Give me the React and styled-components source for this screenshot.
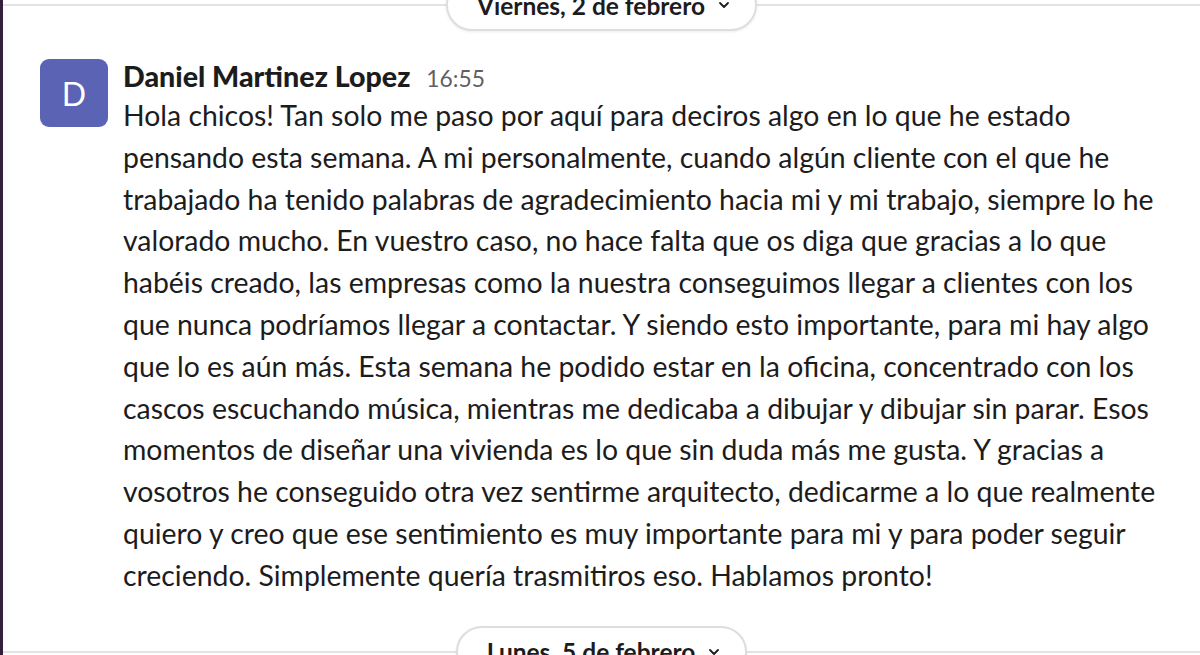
import React from 'react'
import styled, { createGlobalStyle } from 'styled-components'

const GlobalStyle = createGlobalStyle`
  html, body {
    margin: 0;
    padding: 0;
    background: #ffffff;
  }
  body {
    font-family: Lato, "Noto Sans", sans-serif;
    color: #1d1c1d;
    overflow: hidden;
  }
`

const Pane = styled.main`
  height: 655px;
  display: flex;
  flex-direction: column;
  border-left: 3px solid #35203b;
  box-sizing: border-box;
  overflow: hidden;
`

const Divider = styled.div`
  position: relative;
  display: flex;
  justify-content: center;
  height: 52px;
  margin-top: ${p => p.$offset}px;
  flex-shrink: 0;

  &::before {
    content: '';
    position: absolute;
    left: 0;
    right: 0;
    top: 25px;
    border-top: 2px solid #e3e3e3;
  }
`

const DayPill = styled.button`
  position: relative;
  display: flex;
  align-items: center;
  gap: 12px;
  height: 52px;
  padding: 0 24px 0 29px;
  border: 2px solid #dedede;
  border-radius: 26px;
  background: #ffffff;
  box-shadow: 0 1px 3px rgba(0, 0, 0, 0.08);
  font-family: Lato, "Noto Sans", sans-serif;
  font-size: 24.5px;
  font-weight: 700;
  color: #1d1c1d;
  box-sizing: border-box;
`

const Message = styled.article`
  display: flex;
  gap: 15px;
  padding: 28px 38px 0 37px;
  flex-shrink: 0;
`

const Avatar = styled.div`
  width: 68px;
  height: 68px;
  flex-shrink: 0;
  border-radius: 9px;
  background: #5b63b5;
  color: #ffffff;
  display: flex;
  align-items: center;
  justify-content: center;
  font-size: 32px;
  font-weight: 400;
`

const Content = styled.div`
  flex: 1;
  min-width: 0;
`

const Header = styled.div`
  display: flex;
  align-items: baseline;
  gap: 16px;
  line-height: 34px;
`

const Author = styled.span`
  font-size: 28.6px;
  font-weight: 900;
  color: #1d1c1d;
`

const Time = styled.span`
  font-size: 22.8px;
  color: #616061;
`

const Body = styled.p`
  margin: 0;
  font-size: 28.4px;
  line-height: 41.8px;
  color: #1d1c1d;
`

const Chevron = () => (
  <svg width="14" height="14" viewBox="0 0 14 14" fill="none">
    <path d="M3 5l4 4 4-4" stroke="#1d1c1d" strokeWidth="1.8" strokeLinecap="round" strokeLinejoin="round" />
  </svg>
)

const TEXT = 'Hola chicos! Tan solo me paso por aquí para deciros algo en lo que he estado pensando esta semana. A mi personalmente, cuando algún cliente con el que he trabajado ha tenido palabras de agradecimiento hacia mi y mi trabajo, siempre lo he valorado mucho. En vuestro caso, no hace falta que os diga que gracias a lo que habéis creado, las empresas como la nuestra conseguimos llegar a clientes con los que nunca podríamos llegar a contactar. Y siendo esto importante, para mi hay algo que lo es aún más. Esta semana he podido estar en la oficina, concentrado con los cascos escuchando música, mientras me dedicaba a dibujar y dibujar sin parar. Esos momentos de diseñar una vivienda es lo que sin duda más me gusta. Y gracias a vosotros he conseguido otra vez sentirme arquitecto, dedicarme a lo que realmente quiero y creo que ese sentimiento es muy importante para mi y para poder seguir creciendo. Simplemente quería trasmitiros eso. Hablamos pronto!'

export default function App () {
  return (
    <>
      <GlobalStyle />
      <Pane>
        <Divider $offset={-21}>
          <DayPill>Viernes, 2 de febrero <Chevron /></DayPill>
        </Divider>
        <Message>
          <Avatar>D</Avatar>
          <Content>
            <Header>
              <Author>Daniel Martinez Lopez</Author>
              <Time>16:55</Time>
            </Header>
            <Body>{TEXT}</Body>
          </Content>
        </Message>
        <Divider $offset={29}>
          <DayPill>Lunes, 5 de febrero <Chevron /></DayPill>
        </Divider>
      </Pane>
    </>
  )
}
